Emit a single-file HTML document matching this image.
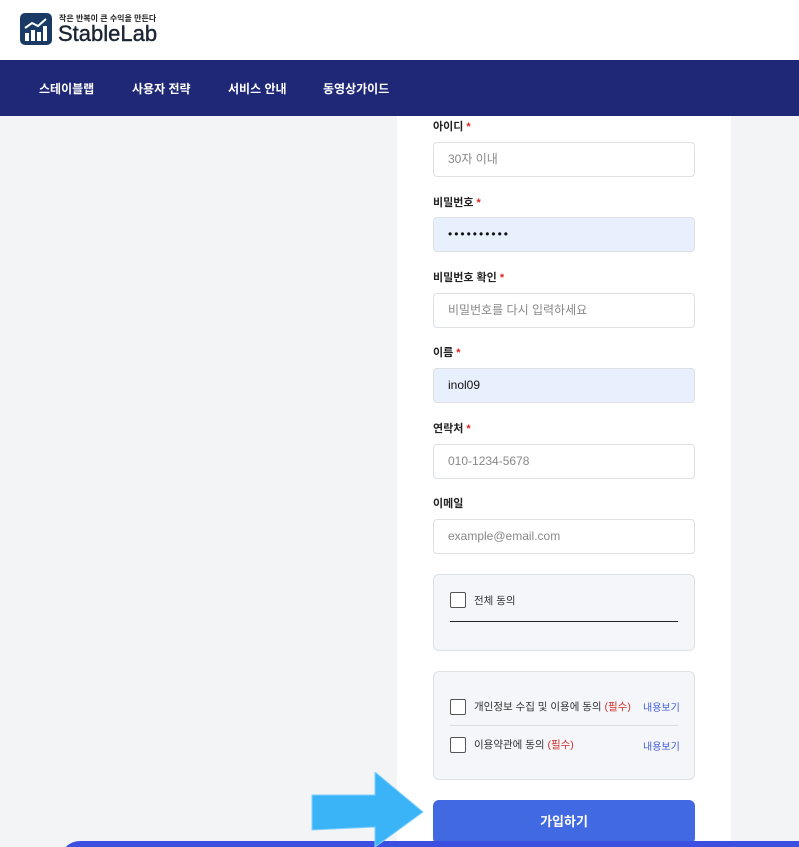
<!DOCTYPE html>
<html><head><meta charset="utf-8"><style>
html,body{margin:0;width:799px;height:847px;overflow:hidden}
body{background:#f3f4f6;font-family:"Liberation Sans","Noto Sans CJK KR",sans-serif;position:relative}
.hdr{position:absolute;top:0;left:0;width:799px;height:60px;background:#fff}
.nav{position:absolute;top:60px;left:0;width:799px;height:56px;background:#1f2877}
.nav span{position:absolute;top:20px;color:#fff;font-size:12px;font-weight:bold}
.card{position:absolute;left:397px;top:116px;width:334px;height:731px;background:#fff}
.lab{position:absolute;left:433px;font-size:11px;font-weight:bold;color:#222}
.lab b{color:#e02424}
.in{position:absolute;left:433px;width:262px;height:35px;border:1px solid #dde0e5;border-radius:4px;box-sizing:border-box;padding-left:14px;line-height:33px;font-size:12px;color:#888;background:#fff}
.in.f{background:#e8f0fd;color:#111}
.box{position:absolute;left:433px;width:262px;border:1px solid #dde0e5;border-radius:6px;background:#f5f6fa;box-sizing:border-box}
.cb{position:absolute;width:14px;height:14px;border:1px solid #555;border-radius:2px;background:#fff}
.t{position:absolute;font-size:10.5px;color:#333}
.t i{font-style:normal;color:#d0312d}
.v{position:absolute;font-size:10px;color:#3e5bd8}
</style></head><body>
<div class="hdr">
<svg style="position:absolute;left:20px;top:13px" width="32" height="32" viewBox="0 0 32 32"><rect width="32" height="32" rx="5" fill="#1a3a66"/><rect x="5" y="20" width="4" height="8" fill="#fff"/><rect x="11" y="17" width="4" height="11" fill="#fff"/><rect x="17" y="19" width="4" height="9" fill="#fff"/><rect x="23" y="13" width="4" height="15" fill="#fff"/><path d="M5 15 L12 10 L18 13 L26 6" stroke="#fff" stroke-width="2" fill="none"/></svg>
<div style="position:absolute;left:59px;top:13px;font-size:8px;font-weight:bold;color:#222">작은 반복이 큰 수익을 만든다</div>
<div style="position:absolute;left:58px;top:21px;font-size:22px;color:#1b2433;-webkit-text-stroke:0.4px #1b2433">StableLab</div>
</div>
<div class="nav"><span style="left:39px">스테이블랩</span><span style="left:132px">사용자 전략</span><span style="left:228px">서비스 안내</span><span style="left:323px">동영상가이드</span></div>
<div class="card"></div>
<div class="lab" style="top:118px">아이디 <b>*</b></div>
<div class="in" style="top:142px">30자 이내</div>
<div class="lab" style="top:194px">비밀번호 <b>*</b></div>
<div class="in f" style="top:217px;letter-spacing:2px">••••••••••</div>
<div class="lab" style="top:269px">비밀번호 확인 <b>*</b></div>
<div class="in" style="top:293px">비밀번호를 다시 입력하세요</div>
<div class="lab" style="top:344px">이름 <b>*</b></div>
<div class="in f" style="top:368px">inol09</div>
<div class="lab" style="top:420px">연락처 <b>*</b></div>
<div class="in" style="top:444px">010-1234-5678</div>
<div class="lab" style="top:495px">이메일</div>
<div class="in" style="top:519px">example@email.com</div>
<div class="box" style="top:574px;height:77px"></div>
<div class="cb" style="left:450px;top:592px"></div>
<div class="t" style="left:474px;top:593px">전체 동의</div>
<div style="position:absolute;left:450px;top:621px;width:228px;height:1px;background:#222"></div>
<div class="box" style="top:671px;height:109px"></div>
<div class="cb" style="left:450px;top:699px"></div>
<div class="t" style="left:474px;top:699px">개인정보 수집 및 이용에 동의 <i>(필수)</i></div>
<div class="v" style="left:643px;top:699px">내용보기</div>
<div style="position:absolute;left:450px;top:725px;width:228px;height:1px;background:#ddd"></div>
<div class="cb" style="left:450px;top:737px"></div>
<div class="t" style="left:474px;top:737px">이용약관에 동의 <i>(필수)</i></div>
<div class="v" style="left:643px;top:738px">내용보기</div>
<div style="position:absolute;left:433px;top:800px;width:262px;height:44px;background:#4169e1;border-radius:6px;color:#fff;font-size:13px;font-weight:bold;text-align:center;line-height:44px">가입하기</div>
<div style="position:absolute;left:60px;top:841px;width:760px;height:30px;background:#3d4fe0;border-radius:20px 0 0 0"></div>
<svg style="position:absolute;left:310px;top:772px" width="115" height="75" viewBox="0 0 115 75"><path d="M2 23 L65 23 L65 0 L113 40 L65 75 L65 55 L2 58 Z" fill="#3bb4f7" stroke="#7fd0ff" stroke-width="1"/></svg>
</body></html>
